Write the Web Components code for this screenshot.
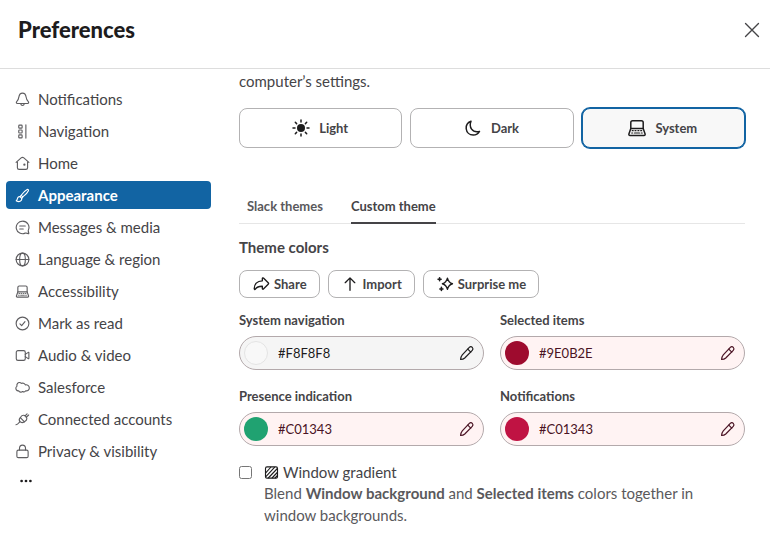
<!DOCTYPE html>
<html lang="en">
<head>
<meta charset="utf-8">
<meta name="viewport" content="width=device-width, initial-scale=1">
<title>Preferences</title>
<style>
  body {
    margin: 0;
    background: #fff;
    color: #454447;
    font-family: Lato, "Liberation Sans", sans-serif;
    font-size: 15px;
    line-height: 22px;
  }
</style>
</head>
<body>
<preferences-dialog></preferences-dialog>

<script>
  const ICONS = {
    close: '<path d="M2.800 2.800l14.400 14.400M17.200 2.800L2.800 17.200"/>',
    bell: '<path d="M10 1.500C7 1.500 5.600 3.900 5.200 6.600C4.800 9.600 4 11 2.500 12.400C1.200 13.700 1.700 15.300 3.300 15.300H16.700C18.300 15.300 18.800 13.700 17.500 12.400C16 11 15.200 9.600 14.800 6.600C14.400 3.900 13 1.500 10 1.500Z"/><path d="M7.500 15.500c.4 1.700 1.300 2.500 2.500 2.500s2.100-.8 2.500-2.500"/>',
    navigation: '<rect x="5" y="1.500" width="4.500" height="4" rx="1"/><rect x="5" y="8" width="4.500" height="4" rx="1"/><rect x="5" y="14.500" width="4.500" height="4" rx="1"/><path d="M14.500 1.200v17.600"/>',
    home: '<path d="M3.200 8v7.500c0 1.400.9 2.300 2.300 2.300h9c1.400 0 2.300-.9 2.300-2.300V8"/><path d="M1.500 8.400l6.700-5.900c1.100-.9 2.500-.9 3.600 0l6.700 5.900"/><circle cx="12.500" cy="11.500" r="1.500" fill="currentColor" stroke="none"/>',
    brush: '<path d="M8.300 9.700C10.500 6.500 14 3 16.200 1.900c1.100-.5 2.200.5 1.700 1.700c-1 2.300-4.300 5.900-7.500 8.200"/><path d="M8.300 9.700l-1.600 1.800M10.400 11.800l-1.500 2M6.700 11.500l2.200 2.300M8.300 9.700l2.100 2.100"/><path d="M6.700 11.500c-1.600-.3-2.700.4-3.200 1.900c-.4 1.500-.8 2.500-1.900 3.700c2.400 1.400 5.500 1.100 6.700-.5c.7-.9.8-1.800.6-2.800"/>',
    message: '<path d="M10 1.500a8.400 8.400 0 1 0 3.600 16c.6-.2 1.100-.2 1.700 0l2.500.7c.5.1.7-.2.6-.7l-.7-2.500c-.1-.6-.1-1 .1-1.500A8.400 8.400 0 0 0 10 1.500Z"/><path d="M6.300 8h7.400M6.300 12h4.700"/>',
    globe: '<circle cx="10" cy="10" r="8.500"/><ellipse cx="10" cy="10" rx="3.800" ry="8.500"/><path d="M1.500 10h17"/>',
    laptop: '<path d="M3.800 10.500V4.500c0-1.100.7-1.800 1.800-1.800h8.800c1.100 0 1.800.7 1.800 1.800v6"/><path d="M3.800 10.500h12.400l1.900 5.500c.2.800-.2 1.500-1.100 1.500H3c-.9 0-1.300-.7-1.100-1.500Z"/><path d="M5.200 12.700h1M8 12.700h1M10.900 12.700h1M13.700 12.700h1M4.700 15h1M7.500 15h5M14.200 15h1" stroke-width="1.200"/>',
    check: '<circle cx="10" cy="10" r="8.500"/><path d="M6.600 10.500l2.300 2.300L13.300 7.500"/>',
    video: '<path d="M4 3.500h7.500c1.400 0 2.200.8 2.200 2.200v8.600c0 1.400-.8 2.200-2.200 2.200H4c-1.400 0-2.300-.8-2.300-2.200V5.700c0-1.400.9-2.200 2.300-2.200Z"/><path d="M13.700 8.500l3.900-2.700c.4-.3.900 0 .9.500v7.400c0 .5-.5.800-.9.500l-3.900-2.700"/>',
    cloud: '<path d="M8.500 4.500C7 2.900 4.500 3.100 3.200 4.700c-.9 1.100-.9 2.400-.5 3.500C1 9.400.7 11.700 1.800 13.200c.8 1.100 1.900 1.500 3.100 1.300c1.200 2 3.800 2.200 5.200.8c1.500.9 3.300.6 4.200-.9c2.500.5 4.800-1.300 4.800-3.800c0-2.900-2.800-4.900-5.300-4.100c-1.100-2.300-3.800-2.800-5.300-2Z"/>',
    plug: '<path d="M7.100 7.600l5.500 5.500c1.900-1 3.100-2.200 3.200-4c.1-2.500-2.300-4.900-4.800-4.800c-1.800.1-3 1.400-3.900 3.300Z"/><path d="M7.100 7.600c-2 2-1.700 3.900-.4 5.300s3.400 1.700 5.900.2"/><path d="M13.400 5.200l2.700-2.700M15 7l3.200-3M6.300 13c-1.500 1.600-2 3.700-5 4"/>',
    lock: '<rect x="2.500" y="8.200" width="15" height="10" rx="2"/><path d="M6 8V5.800C6 3.300 7.700 1.500 10 1.500s4 1.800 4 4.300V8"/>',
    dots: '<g fill="currentColor" stroke="none"><circle cx="4.500" cy="10" r="1.700"/><circle cx="10" cy="10" r="1.700"/><circle cx="15.500" cy="10" r="1.700"/></g>',
    sun: '<circle cx="10" cy="10" r="4" fill="currentColor" stroke="none"/><path d="M10 2v2M10 16V18M2 10h2M16 10H18M4.300 4.300l1.300 1.300M14.400 14.400l1.300 1.300M15.700 4.300l-1.300 1.300M5.600 14.400l-1.300 1.300"/>',
    moon: '<path d="M8 3.300C4.500 4.600 2.900 7.500 3.200 10.700c.4 3.800 3.300 6.300 7 6.300c2.800 0 5-1.200 6.300-3.500c-3.500.8-6.300-.1-7.900-2.400C6.900 8.700 6.900 5.800 8 3.300Z"/>',
    share: '<path d="M11.500 3.900c0-.7.7-1 1.200-.5l5.300 5.300c.5.500.5 1.100 0 1.600l-5.300 5.300c-.5.500-1.200.2-1.200-.5v-2.600C7.500 12.400 5.200 13.500 3.700 15.700c-.4.700-1.200.5-1.200-.3C2.400 10.200 5.500 6.600 11.500 6.500Z"/>',
    up: '<path d="M10 17V3.500M4.700 8.500L10 3.200l5.300 5.300"/>',
    sparkles: '<path d="M12.700 3.500c.9 3.800 2 5.200 5.600 6.200c-3.600 1-4.700 2.500-5.600 6.300c-.9-3.800-2-5.300-5.600-6.300c3.600-1 4.700-2.400 5.600-6.200Z"/><path d="M4 3v3.400M2.300 4.700h3.400M6 13.800v3.400M4.300 15.500h3.400" stroke-width="1.800"/>',
    pencil: '<path d="M12.900 3c1.200-1.200 2.600-1.200 3.700 0s1.200 2.500 0 3.700L7.200 16.200c-1.200 1.100-3.400 1.800-5.200 1.900C2.200 16.200 2.900 13.800 4.100 12.400Z"/><path d="M11 5.200l3.700 3.700"/>',
    gradient: '<rect x="2" y="2.500" width="16" height="15" rx="2"/><path d="M2.300 10.500L9 3M2.500 15.500L14 3.300M6 17L17.500 5M11 17l6.700-7M15 17l3-3"/>'
  };

  class PrefIcon extends HTMLElement {
    constructor() {
      super();
      this.attachShadow({ mode: 'open' });
    }

    connectedCallback() {
      this.shadowRoot.innerHTML = `
        <style>
        :host {
          display: inline-block;
          flex: none;
          width: var(--icon-size, 16px);
          height: var(--icon-size, 16px);
        }

        svg {
          display: block;
          width: 100%;
          height: 100%;
          fill: none;
          stroke: currentColor;
          stroke-width: 1.5;
          stroke-linecap: round;
          stroke-linejoin: round;
        }
        </style>
        <svg viewBox="0 0 20 20" aria-hidden="true">${ICONS[this.getAttribute('name')]}</svg>
      `;
    }
  }

  class NavItem extends HTMLElement {
    constructor() {
      super();
      this.attachShadow({ mode: 'open' });
    }

    connectedCallback() {
      this.shadowRoot.innerHTML = `
        <style>
        :host {
          display: block;
        }

        button {
          display: flex;
          align-items: center;
          gap: 8px;
          width: 100%;
          height: 28px;
          padding: 0 9px;
          border: 0;
          border-radius: 4px;
          background: none;
          color: #454447;
          font: inherit;
          text-align: left;
          cursor: pointer;
        }

        pref-icon {
          --icon-size: 15px;
          color: #5e5d60;
        }

        :host([selected]) button {
          background: #1264a3;
          color: #fff;
          font-weight: 700;
        }

        :host([selected]) pref-icon {
          color: #fff;
        }
        </style>
        <button type="button">
          <pref-icon name="${this.getAttribute('icon')}"></pref-icon>
          <slot></slot>
        </button>
      `;
    }
  }

  class ThemeOption extends HTMLElement {
    constructor() {
      super();
      this.attachShadow({ mode: 'open' });
    }

    connectedCallback() {
      this.shadowRoot.innerHTML = `
        <style>
        :host {
          display: block;
        }

        button {
          display: flex;
          align-items: center;
          justify-content: center;
          gap: 8px;
          width: 100%;
          height: 40px;
          padding: 0 14px 0 12px;
          border: 1px solid #b3b2b3;
          border-radius: 8px;
          background: #fff;
          color: #1d1c1d;
          font: inherit;
          font-size: 13px;
          line-height: 20px;
          font-weight: 700;
          cursor: pointer;
        }

        span {
          color: #454447;
        }

        :host([selected]) button {
          border-color: #1264a3;
          box-shadow: 0 0 0 1px #1264a3;
          background: #f8f8f8;
        }

        pref-icon {
          --icon-size: 20px;
        }
        </style>
        <button type="button" aria-pressed="${this.hasAttribute('selected')}">
          <pref-icon name="${this.getAttribute('icon')}"></pref-icon>
          <span><slot></slot></span>
        </button>
      `;
    }
  }

  class ActionButton extends HTMLElement {
    constructor() {
      super();
      this.attachShadow({ mode: 'open' });
    }

    connectedCallback() {
      this.shadowRoot.innerHTML = `
        <style>
        :host {
          display: block;
        }

        button {
          display: flex;
          align-items: center;
          gap: 4px;
          height: 28px;
          padding: 0 12px;
          border: 1px solid #b3b2b3;
          border-radius: 8px;
          background: #fff;
          color: #1d1c1d;
          font: inherit;
          font-size: 13px;
          font-weight: 700;
          cursor: pointer;
        }

        span {
          color: #454447;
        }

        pref-icon {
          --icon-size: 18px;
        }
        </style>
        <button type="button">
          <pref-icon name="${this.getAttribute('icon')}"></pref-icon>
          <span><slot></slot></span>
        </button>
      `;
    }
  }

  class ColorField extends HTMLElement {
    constructor() {
      super();
      this.attachShadow({ mode: 'open' });
    }

    connectedCallback() {
      const label = this.getAttribute('label');
      this.shadowRoot.innerHTML = `
        <style>
        :host {
          display: block;
          min-width: 0;
          --tint: #fff3f3;
          --ink: #4a1324;
        }

        :host([neutral]) {
          --tint: #f5f5f5;
          --ink: #1d1c1d;
        }

        label {
          display: block;
          margin-bottom: 6px;
          line-height: 20px;
          font-size: 13px;
          font-weight: 700;
        }

        .pill {
          display: flex;
          align-items: center;
          box-sizing: border-box;
          height: 34px;
          padding: 0 8px 0 4px;
          border: 1px solid #b3a9ab;
          border-radius: 17px;
          background: var(--tint);
          color: var(--ink);
        }

        .swatch {
          flex: none;
          box-sizing: border-box;
          width: 24px;
          height: 24px;
          border-radius: 50%;
          background: ${this.getAttribute('swatch')};
        }

        :host([neutral]) .swatch {
          border: 1px solid #e4e4e4;
        }

        input {
          flex: 1;
          min-width: 0;
          padding: 0 10px;
          border: 0;
          outline: 0;
          background: none;
          color: inherit;
          font: inherit;
          font-size: 13px;
        }

        button {
          display: flex;
          padding: 0;
          border: 0;
          background: none;
          color: inherit;
          cursor: pointer;
        }
        </style>
        <label for="hex">${label}</label>
        <div class="pill">
          <span class="swatch"></span>
          <input id="hex" type="text" value="${this.getAttribute('value')}" spellcheck="false">
          <button type="button" aria-label="Edit"><pref-icon name="pencil"></pref-icon></button>
        </div>
      `;
    }
  }

  class GradientOption extends HTMLElement {
    constructor() {
      super();
      this.attachShadow({ mode: 'open' });
      this.shadowRoot.innerHTML = `
        <style>
        :host {
          display: grid;
          grid-template-columns: 13px 1fr;
          column-gap: 12px;
        }

        input {
          width: 13px;
          height: 13px;
          margin: 4px 0 0;
        }

        label {
          display: flex;
          align-items: center;
          gap: 4px;
          line-height: 20px;
        }

        pref-icon {
          --icon-size: 15px;
          color: #1d1c1d;
        }

        p {
          grid-column: 2;
          margin: 0;
          color: #5a595c;
        }
        </style>
        <input id="gradient" type="checkbox">
        <label for="gradient"><pref-icon name="gradient"></pref-icon>Window gradient</label>
        <p><slot></slot></p>
      `;
    }
  }

  class PreferencesDialog extends HTMLElement {
    constructor() {
      super();
      this.attachShadow({ mode: 'open' });
      this.shadowRoot.innerHTML = `
        <style>
        :host {
          display: block;
        }

        header {
          display: flex;
          align-items: center;
          justify-content: space-between;
          padding: 15px 9px 23px 18px;
          border-bottom: 1px solid #dddddd;
        }

        h1 {
          margin: 0;
          color: #1d1c1d;
          font-size: 22px;
          line-height: 30px;
          font-weight: 900;
        }

        .close {
          display: flex;
          padding: 0;
          border: 0;
          background: none;
          color: #454447;
          cursor: pointer;
          --icon-size: 18px;
        }

        .body {
          display: grid;
          grid-template-columns: 205px 1fr;
          column-gap: 28px;
          padding: 0 25px 0 6px;
        }

        nav {
          display: flex;
          flex-direction: column;
          gap: 4px;
          padding-top: 16px;
        }

        .more {
          display: flex;
          width: 40px;
          padding: 4px 12px;
          border: 0;
          background: none;
          color: #1d1c1d;
          cursor: pointer;
        }

        .intro {
          margin: 1px 0 16px;
        }

        .themes {
          display: grid;
          grid-template-columns: repeat(3, 1fr);
          gap: 8px;
        }

        .tabs {
          display: flex;
          gap: 12px;
          margin-top: 44px;
          border-bottom: 1px solid #e6e6e6;
        }

        .tabs button {
          height: 32px;
          margin: 0 8px -1px;
          padding: 0 0 2px;
          border: 0;
          border-bottom: 2px solid transparent;
          background: none;
          color: #5a595c;
          font: inherit;
          font-size: 13px;
          font-weight: 700;
          cursor: pointer;
        }

        .tabs button[aria-selected="true"] {
          border-color: #454447;
          color: #454447;
        }

        h2 {
          margin: 12px 0;
          font-size: 15px;
          line-height: 22px;
          font-weight: 700;
        }

        .actions {
          display: flex;
          gap: 8px;
          margin-bottom: 12px;
        }

        .colors {
          display: grid;
          grid-template-columns: 1fr 1fr;
          gap: 16px;
          margin-bottom: 16px;
        }
        </style>
        <header>
          <h1>Preferences</h1>
          <button class="close" type="button" aria-label="Close"><pref-icon name="close"></pref-icon></button>
        </header>
        <div class="body">
          <nav>
            <nav-item icon="bell">Notifications</nav-item>
            <nav-item icon="navigation">Navigation</nav-item>
            <nav-item icon="home">Home</nav-item>
            <nav-item icon="brush" selected>Appearance</nav-item>
            <nav-item icon="message">Messages &amp; media</nav-item>
            <nav-item icon="globe">Language &amp; region</nav-item>
            <nav-item icon="laptop">Accessibility</nav-item>
            <nav-item icon="check">Mark as read</nav-item>
            <nav-item icon="video">Audio &amp; video</nav-item>
            <nav-item icon="cloud">Salesforce</nav-item>
            <nav-item icon="plug">Connected accounts</nav-item>
            <nav-item icon="lock">Privacy &amp; visibility</nav-item>
            <button class="more" type="button" aria-label="More"><pref-icon name="dots"></pref-icon></button>
          </nav>
          <main>
            <p class="intro">computer’s settings.</p>
            <div class="themes">
              <theme-option icon="sun">Light</theme-option>
              <theme-option icon="moon">Dark</theme-option>
              <theme-option icon="laptop" selected>System</theme-option>
            </div>
            <div class="tabs" role="tablist">
              <button type="button" role="tab" aria-selected="false">Slack themes</button>
              <button type="button" role="tab" aria-selected="true">Custom theme</button>
            </div>
            <h2>Theme colors</h2>
            <div class="actions">
              <action-button icon="share">Share</action-button>
              <action-button icon="up">Import</action-button>
              <action-button icon="sparkles">Surprise me</action-button>
            </div>
            <div class="colors">
              <color-field label="System navigation" value="#F8F8F8" swatch="#f8f8f8" neutral></color-field>
              <color-field label="Selected items" value="#9E0B2E" swatch="#9e0b2e"></color-field>
              <color-field label="Presence indication" value="#C01343" swatch="#20a271"></color-field>
              <color-field label="Notifications" value="#C01343" swatch="#c01343"></color-field>
            </div>
            <gradient-option>Blend <b>Window background</b> and <b>Selected items</b> colors together in window backgrounds.</gradient-option>
          </main>
        </div>
      `;
    }
  }

  customElements.define('pref-icon', PrefIcon);
  customElements.define('nav-item', NavItem);
  customElements.define('theme-option', ThemeOption);
  customElements.define('action-button', ActionButton);
  customElements.define('color-field', ColorField);
  customElements.define('gradient-option', GradientOption);
  customElements.define('preferences-dialog', PreferencesDialog);
</script>
</body>
</html>
